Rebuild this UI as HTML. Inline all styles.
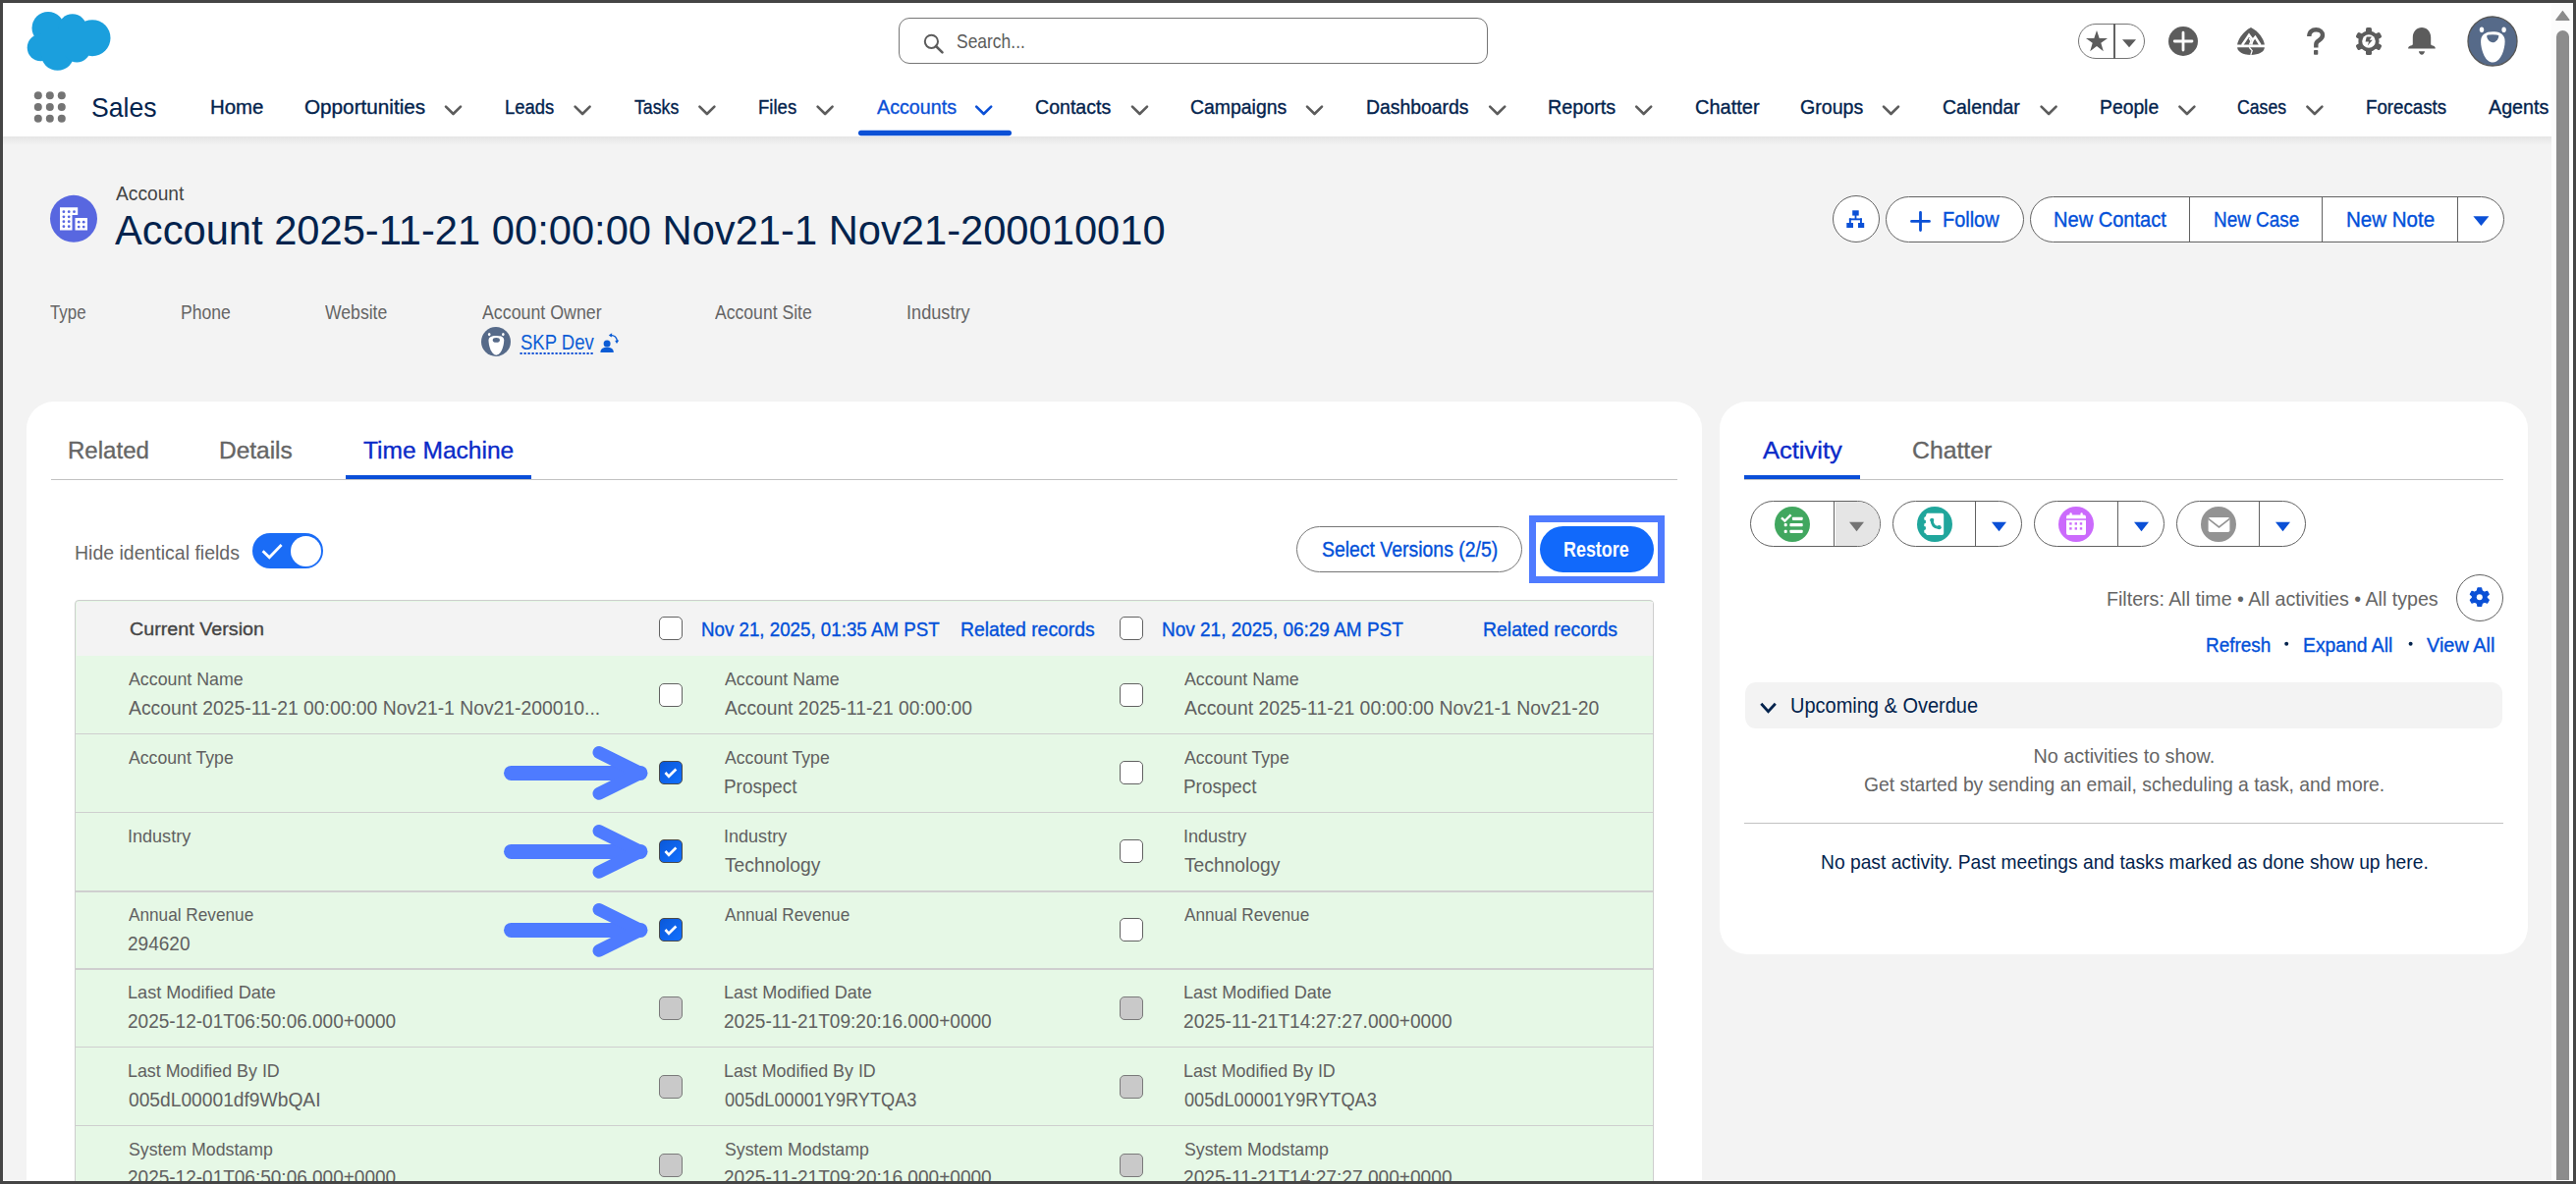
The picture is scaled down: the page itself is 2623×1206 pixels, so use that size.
<!DOCTYPE html>
<html><head><meta charset="utf-8"><title>Account</title><style>
html,body{margin:0;padding:0}
body{width:2623px;height:1206px;position:relative;overflow:hidden;background:#454545;font-family:"Liberation Sans",sans-serif}
.t{position:absolute;white-space:nowrap;line-height:1;transform-origin:0 0}
.a{position:absolute;box-sizing:border-box}
.cb{position:absolute;box-sizing:border-box;width:24px;height:24px;border:1.3px solid #626262;border-radius:5px;background:#fff}
.cbd{background:#c9c9c9;border-color:#7a7a7a}
.cbc{background:linear-gradient(135deg,#0b58d8,#1270ff);border-color:#4a4a4a}
.rl{position:absolute;left:77px;width:1606px;height:1.5px;background:#cfcfcf}
svg.ov{position:absolute;left:0;top:0}

</style></head><body>
<div class="a" style="left:3px;top:3px;width:2595px;height:1200px;background:#f3f3f3"></div>
<div class="a" style="left:3px;top:3px;width:2595px;height:136px;background:#fff"></div>
<div class="a" style="left:3px;top:139px;width:2595px;height:9px;background:linear-gradient(rgba(0,0,0,0.06),rgba(0,0,0,0))"></div>
<div class="a" style="left:2598px;top:3px;width:22px;height:1200px;background:#fcfcfc"></div>
<div class="a" style="left:2603px;top:31px;width:13px;height:1171px;background:#8c8c8c;border-radius:6.5px 6.5px 0 0"></div>
<div class="a" style="left:3px;top:1202px;width:2595px;height:1px;background:#fcfcfc"></div>

<!-- search -->
<div class="a" style="left:915px;top:18px;width:600px;height:47px;border:1.5px solid #767676;border-radius:11px;background:#fff"></div>
<!-- favorites pill -->
<div class="a" style="left:2116px;top:24px;width:68px;height:36px;border:1.5px solid #767676;border-radius:18px;background:#fff"></div>
<div class="a" style="left:2152px;top:24px;width:2px;height:36px;background:#626262"></div>

<!-- cards -->
<div class="a" style="left:27px;top:409px;width:1706px;height:900px;border-radius:28px;background:#fff"></div>
<div class="a" style="left:1751px;top:409px;width:823px;height:563px;border-radius:28px;background:#fff"></div>

<!-- tabs -->
<div class="a" style="left:52px;top:488px;width:1656px;height:1px;background:#c2c2c2"></div>
<div class="a" style="left:352px;top:484px;width:189px;height:4px;background:#0b4fd8"></div>
<div class="a" style="left:1776px;top:488px;width:773px;height:1px;background:#c2c2c2"></div>
<div class="a" style="left:1776px;top:484px;width:118px;height:4px;background:#0b4fd8"></div>

<!-- toggle -->
<div class="a" style="left:257px;top:543px;width:72px;height:36px;border-radius:18px;background:#1a6cf6"></div>
<div class="a" style="left:296px;top:545.5px;width:31px;height:31px;border-radius:50%;background:#fff"></div>

<!-- select versions / restore -->
<div class="a" style="left:1320px;top:536px;width:230px;height:47px;border:1.5px solid #767676;border-radius:23.5px;background:#fff"></div>
<div class="a" style="left:1557px;top:525px;width:138px;height:69px;border:7px solid #4f7bff"></div>
<div class="a" style="left:1568px;top:536px;width:116px;height:47px;border-radius:23.5px;background:#1169fb"></div>

<!-- page header buttons -->
<div class="a" style="left:1866px;top:199px;width:48px;height:48px;border:1.5px solid #626262;border-radius:50%;background:#fff"></div>
<div class="a" style="left:1920px;top:200px;width:141px;height:47px;border:1.5px solid #626262;border-radius:23.5px;background:#fff"></div>
<div class="a" style="left:2067px;top:200px;width:483px;height:47px;border:1.5px solid #626262;border-radius:23.5px;background:#fff"></div>
<div class="a" style="left:2228.8px;top:200px;width:1.5px;height:47px;background:#626262"></div>
<div class="a" style="left:2363.5px;top:200px;width:1.5px;height:47px;background:#626262"></div>
<div class="a" style="left:2501.7px;top:200px;width:1.5px;height:47px;background:#626262"></div>

<!-- table -->
<div class="a" style="left:76px;top:611px;width:1608px;height:700px;border:1.5px solid #cdcdcd;border-radius:4px 4px 0 0;background:#e6f8e6"></div>
<div class="a" style="left:77.5px;top:612.5px;width:1605px;height:55.1px;background:#f3f3f3;border-radius:0"></div>
<div class="rl" style="top:746.8px"></div>
<div class="rl" style="top:826.8px"></div>
<div class="rl" style="top:907px"></div>
<div class="rl" style="top:986px"></div>
<div class="rl" style="top:1065.9px"></div>
<div class="rl" style="top:1145.8px"></div>

<div class="cb" style="left:671px;top:628px"></div>
<div class="cb" style="left:1140px;top:628px"></div>
<div class="cb" style="left:671px;top:696px"></div>
<div class="cb" style="left:1140px;top:696px"></div>
<div class="cb cbc" style="left:671px;top:775px"></div>
<div class="cb" style="left:1140px;top:775px"></div>
<div class="cb cbc" style="left:671px;top:855px"></div>
<div class="cb" style="left:1140px;top:855px"></div>
<div class="cb cbc" style="left:671px;top:935px"></div>
<div class="cb" style="left:1140px;top:935px"></div>
<div class="cb cbd" style="left:671px;top:1015px"></div>
<div class="cb cbd" style="left:1140px;top:1015px"></div>
<div class="cb cbd" style="left:671px;top:1095px"></div>
<div class="cb cbd" style="left:1140px;top:1095px"></div>
<div class="cb cbd" style="left:671px;top:1175px"></div>
<div class="cb cbd" style="left:1140px;top:1175px"></div>

<!-- activity button groups -->
<div class="a" style="left:1782px;top:510px;width:133px;height:47px;border:1.5px solid #626262;border-radius:23.5px;background:#fff;overflow:hidden"><div style="position:absolute;left:85.6px;top:0;width:50px;height:47px;background:#e5e5e5"></div></div>
<div class="a" style="left:1866.9px;top:510px;width:1.5px;height:47px;background:#626262"></div>
<div class="a" style="left:1927px;top:510px;width:132px;height:47px;border:1.5px solid #626262;border-radius:23.5px;background:#fff"></div>
<div class="a" style="left:2010.7px;top:510px;width:1.5px;height:47px;background:#626262"></div>
<div class="a" style="left:2071px;top:510px;width:133px;height:47px;border:1.5px solid #626262;border-radius:23.5px;background:#fff"></div>
<div class="a" style="left:2155.6px;top:510px;width:1.5px;height:47px;background:#626262"></div>
<div class="a" style="left:2216px;top:510px;width:132px;height:47px;border:1.5px solid #626262;border-radius:23.5px;background:#fff"></div>
<div class="a" style="left:2299.5px;top:510px;width:1.5px;height:47px;background:#626262"></div>
<div class="a" style="left:2501px;top:584.5px;width:48px;height:48px;border:1.5px solid #626262;border-radius:50%;background:#fff"></div>
<div class="a" style="left:1777px;top:695px;width:771px;height:47px;border-radius:11px;background:#f3f3f3"></div>
<div class="a" style="left:1776px;top:838px;width:773px;height:1px;background:#c2c2c2"></div>

<svg class="ov" width="2623" height="1206" viewBox="0 0 2623 1206">
<!-- scrollbar arrow -->
<path d="M2609.4 11.5 L2616 20.3 L2602.8 20.3 Z" fill="#8c8c8c" stroke="#8c8c8c" stroke-width="1.2" stroke-linejoin="round"/>
<!-- salesforce logo -->
<g fill="#1b9fdd">
<circle cx="49" cy="28.5" r="16.5"/><circle cx="73.8" cy="28.6" r="14.4"/><circle cx="94" cy="38.7" r="18.5"/>
<circle cx="41.5" cy="48.5" r="13.8"/><circle cx="58.6" cy="55" r="16.8"/><circle cx="78.3" cy="50" r="13.6"/>
<rect x="42" y="30" width="50" height="26"/>
</g>
<!-- search icon -->
<circle cx="948.4" cy="42.3" r="6.6" fill="none" stroke="#5c5c5c" stroke-width="2"/>
<path d="M953 47 L959.5 53.4" stroke="#5c5c5c" stroke-width="2.6" stroke-linecap="round"/>
<!-- favorites star + caret -->
<path d="M2135 31 L2137.7 38.9 L2146 38.9 L2139.3 43.8 L2141.8 52.2 L2135 47 L2128.2 52.2 L2130.7 43.8 L2124 38.9 L2132.3 38.9 Z" fill="#5c5c5c"/>
<path d="M2161 40.3 L2175 40.3 L2168 48.2 Z" fill="#5c5c5c"/>
<!-- plus circle -->
<circle cx="2223" cy="42" r="15" fill="#5c5c5c"/>
<path d="M2223 33.2 V51 M2214.2 42 H2232" stroke="#fff" stroke-width="2.8" stroke-linecap="round"/>
<!-- trailhead -->
<path d="M2292 28.1 C2300 32 2305 40 2305.9 45.4 L2278.1 45.4 C2279 40 2284 32 2292 28.1 Z" fill="#5c5c5c"/>
<path d="M2278.1 48.3 L2305.9 48.3 C2305.5 53 2300 55.9 2292 55.9 C2284 55.9 2278.5 53 2278.1 48.3 Z" fill="#5c5c5c"/>
<path d="M2283 46 L2290 35.6 L2293.8 40.8 L2296.4 37.8 L2301.6 46" fill="none" stroke="#fff" stroke-width="2.4" stroke-linejoin="miter"/>
<path d="M2290.3 38.8 L2292 42 L2290.6 45.6" fill="none" stroke="#fff" stroke-width="1.5"/>
<path d="M2293.8 40.8 L2292.4 45.6" fill="none" stroke="#fff" stroke-width="2"/>
<path d="M2290.3 48.3 L2293.2 51.6 L2291.8 55.9" fill="none" stroke="#fff" stroke-width="1.3"/>
<!-- question -->
<path d="M2351.3 37 C2351.3 32.3 2354.3 30.3 2358.3 30.3 C2362.3 30.3 2365 32.6 2365 35.8 C2365 39 2362.5 40.3 2360.5 41.6 C2358.8 42.7 2358.3 43.8 2358.3 45.5 L2358.3 48.5" fill="none" stroke="#5c5c5c" stroke-width="4.4"/>
<rect x="2356" y="51" width="4.3" height="4.7" rx="0.8" fill="#5c5c5c"/>
<!-- gear -->
<g transform="translate(2412,42)" fill="#5c5c5c">
<circle cx="0" cy="0" r="10.6"/>
<rect x="-3" y="-14" width="6" height="8" rx="1.6"/>
<rect x="-3" y="-14" width="6" height="8" rx="1.6" transform="rotate(60)"/>
<rect x="-3" y="-14" width="6" height="8" rx="1.6" transform="rotate(120)"/>
<rect x="-3" y="-14" width="6" height="8" rx="1.6" transform="rotate(180)"/>
<rect x="-3" y="-14" width="6" height="8" rx="1.6" transform="rotate(240)"/>
<rect x="-3" y="-14" width="6" height="8" rx="1.6" transform="rotate(300)"/>
<circle cx="0" cy="0" r="6.8" fill="#fff"/>
<path d="M-2.3 -4.6 L3 -4.6 L0.7 -1.3 L3.8 -1.3 L-1.2 4.4 L0.1 0.6 L-3.4 0.6 Z"/>
</g>
<!-- bell -->
<path d="M2466 28 C2461 28 2456.8 32 2456.8 38 L2456.8 45 C2456.8 46 2455 46.5 2453.5 47 C2452.5 47.4 2452.1 48.3 2452.1 49.6 L2479.8 49.6 C2479.8 48.3 2479.4 47.4 2478.4 47 C2477 46.5 2475.2 46 2475.2 45 L2475.2 38 C2475.2 32 2471 28 2466 28 Z" fill="#5c5c5c"/>
<path d="M2462.9 52.2 L2469 52.2 C2468.6 54.4 2467.5 55.7 2466 55.7 C2464.5 55.7 2463.3 54.4 2462.9 52.2 Z" fill="#5c5c5c"/>
<!-- avatar -->
<circle cx="2538" cy="42" r="25" fill="#566a89" stroke="#555" stroke-width="1.3"/>
<ellipse cx="2527" cy="30.2" rx="2.2" ry="2.8" fill="#fff"/>
<ellipse cx="2549.6" cy="30.2" rx="2.2" ry="2.8" fill="#fff"/>
<path d="M2538.3 32.2 C2546 32.2 2550.6 35.5 2550.6 42 C2550.6 51 2546 63.6 2538.3 63.6 C2530.6 63.6 2526.1 51 2526.1 42 C2526.1 35.5 2530.6 32.2 2538.3 32.2 Z" fill="#fff"/>
<path d="M2532.2 36.6 Q2532.2 35.3 2538.2 35.3 Q2544.3 35.3 2544.3 36.6 C2544.3 40 2541.5 43.2 2538.2 43.2 C2535 43.2 2532.2 40 2532.2 36.6 Z" fill="#566a89"/>
<!-- app launcher -->
<g fill="#747474">
<circle cx="38.8" cy="97.2" r="4"/><circle cx="50.8" cy="97.2" r="4"/><circle cx="62.8" cy="97.2" r="4"/>
<circle cx="38.8" cy="109" r="4"/><circle cx="50.8" cy="109" r="4"/><circle cx="62.8" cy="109" r="4"/>
<circle cx="38.8" cy="120.7" r="4"/><circle cx="50.8" cy="120.7" r="4"/><circle cx="62.8" cy="120.7" r="4"/>
</g>
<!-- nav chevrons -->
<g fill="none" stroke="#5c5c5c" stroke-width="2.6" stroke-linecap="round" stroke-linejoin="round">
<path d="M454.0 108.6 L461.5 116 L469.0 108.6"/>
<path d="M585.6 108.6 L593.1 116 L600.6 108.6"/>
<path d="M712.4 108.6 L719.9 116 L727.4 108.6"/>
<path d="M832.6 108.6 L840.1 116 L847.6 108.6"/>
<path d="M1153.0 108.6 L1160.5 116 L1168.0 108.6"/>
<path d="M1331.0 108.6 L1338.5 116 L1346.0 108.6"/>
<path d="M1517.2 108.6 L1524.7 116 L1532.2 108.6"/>
<path d="M1666.2 108.6 L1673.7 116 L1681.2 108.6"/>
<path d="M1918.0 108.6 L1925.5 116 L1933.0 108.6"/>
<path d="M2078.6 108.6 L2086.1 116 L2093.6 108.6"/>
<path d="M2219.4 108.6 L2226.9 116 L2234.4 108.6"/>
<path d="M2349.4 108.6 L2356.9 116 L2364.4 108.6"/>
</g>
<path d="M994.2 108.6 L1001.7 116 L1009.2 108.6" fill="none" stroke="#0b50d6" stroke-width="2.6" stroke-linecap="round" stroke-linejoin="round"/>
<rect x="874" y="132.8" width="156" height="5.4" rx="2.7" fill="#0b50d6"/>
<!-- account icon -->
<circle cx="75" cy="222.8" r="24" fill="#5867e0"/>
<path d="M61 211.3 H79.2 V219 H73.5 V234.5 H61 Z" fill="#fff"/>
<rect x="76.5" y="222" width="12.5" height="12.5" fill="#fff"/>
<g fill="#5867e0">
<circle cx="64.9" cy="215.7" r="1.4"/><circle cx="70.2" cy="215.7" r="1.4"/><circle cx="75.5" cy="215.7" r="1.4"/>
<circle cx="64.9" cy="220.8" r="1.4"/><circle cx="70.2" cy="220.8" r="1.4"/>
<circle cx="64.9" cy="225.7" r="1.4"/><circle cx="70.2" cy="225.7" r="1.4"/>
<circle cx="64.9" cy="230.7" r="1.4"/><circle cx="70.2" cy="230.7" r="1.4"/>
<circle cx="80.2" cy="226.2" r="1.4"/><circle cx="85.2" cy="226.2" r="1.4"/>
<circle cx="80.2" cy="231.1" r="1.4"/><circle cx="85.2" cy="231.1" r="1.4"/>
</g>
<!-- hierarchy icon -->
<g fill="#0b50d6">
<rect x="1886.2" y="214.3" width="6.5" height="5.3"/>
<rect x="1888.6" y="219" width="1.8" height="4"/>
<rect x="1882.9" y="222.4" width="13" height="1.9"/>
<rect x="1882.9" y="222.4" width="1.9" height="5"/>
<rect x="1894" y="222.4" width="1.9" height="5"/>
<rect x="1880.3" y="227" width="6.7" height="5"/>
<rect x="1892" y="227" width="6.2" height="5"/>
</g>
<!-- follow plus -->
<path d="M1955.5 216.3 V234.5 M1946.5 225.4 H1964.5" stroke="#0b50d6" stroke-width="2.8" stroke-linecap="round"/>
<!-- dropdown triangle -->
<path d="M2518.4 220.2 L2534.4 220.2 L2526.4 230 Z" fill="#0b50d6"/>
<!-- owner avatar -->
<circle cx="505" cy="348" r="15" fill="#566a89"/>
<ellipse cx="498.2" cy="340.6" rx="1.3" ry="1.7" fill="#fff"/>
<ellipse cx="512.3" cy="340.6" rx="1.3" ry="1.7" fill="#fff"/>
<path d="M505.3 341.9 C510.7 341.9 513.2 343.5 513.2 346.5 C513.2 352 510.3 361.7 505.3 361.7 C500.3 361.7 497.5 352 497.5 346.5 C497.5 343.5 500 341.9 505.3 341.9 Z" fill="#fff"/>
<ellipse cx="505.3" cy="346.4" rx="3.6" ry="2.4" fill="#566a89"/>
<!-- dotted underline -->
<path d="M529.5 359.9 H604.5" stroke="#0b50d6" stroke-width="2" stroke-dasharray="2.2 1.8"/>
<!-- change owner icon -->
<circle cx="618.1" cy="350" r="3.5" fill="#0b5cd5"/>
<path d="M611.4 359 C611.4 355.3 614 353.8 618.1 353.8 C622.2 353.8 624.8 355.3 624.8 359 Z" fill="#0b5cd5"/>
<path d="M621 341.5 C625 341 628 343.5 628.6 347.5" fill="none" stroke="#0b5cd5" stroke-width="1.6"/>
<path d="M619.8 341.6 L623.2 339.3 L622.8 343.6 Z M626.2 347 L630.3 346.6 L628 350 Z" fill="#0b5cd5"/>

<!-- toggle check -->
<path d="M267.6 561.3 L274.3 567.8 L286.6 555" fill="none" stroke="#fff" stroke-width="2.8"/>

<!-- checked marks -->
<g fill="none" stroke="#fff" stroke-width="2.6">
<path d="M677.5 787 L681 790.8 L688.4 783.5"/>
<path d="M677.5 867 L681 870.8 L688.4 863.5"/>
<path d="M677.5 947 L681 950.8 L688.4 943.5"/>
</g>

<!-- arrows -->
<g fill="none" stroke="#4e7bff" stroke-linecap="round" stroke-linejoin="round">
<path d="M520.5 787.4 H652" stroke-width="15"/>
<path d="M610 766.5 L652 787.4 L610 808.3" stroke-width="13"/>
<path d="M520.5 867.4 H652" stroke-width="15"/>
<path d="M610 846.5 L652 867.4 L610 888.3" stroke-width="13"/>
<path d="M520.5 947.4 H652" stroke-width="15"/>
<path d="M610 926.5 L652 947.4 L610 968.3" stroke-width="13"/>
</g>

<!-- activity icons -->
<circle cx="1825" cy="534" r="18" fill="#41a75f"/>
<path d="M1814 527.4 L1817.4 530.6 L1823.6 524.4" fill="none" stroke="#fff" stroke-width="2.4"/>
<g fill="#fff">
<rect x="1824.9" y="526.8" width="10.8" height="3.1" rx="0.8"/>
<rect x="1822.4" y="533.1" width="13.3" height="3.1" rx="0.8"/>
<rect x="1822.4" y="539.8" width="13.3" height="3.1" rx="0.8"/>
<rect x="1816.7" y="533.1" width="3" height="3.1" rx="1"/>
<rect x="1816.7" y="539.8" width="3" height="3.1" rx="1"/>
</g>
<path d="M1883 531.7 L1898 531.7 L1890.5 541.3 Z" fill="#747474"/>

<circle cx="1970" cy="534" r="18" fill="#20a69c"/>
<path d="M1962.5 522.8 H1977.5 Q1979.2 522.8 1979.2 524.5 V543.2 Q1979.2 544.9 1977.5 544.9 H1962.5 Q1961.4 544.9 1960.9 543.6 L1959.3 542.4 V540 L1960.9 539.3 V536.6 L1959.3 535.9 V533.5 L1960.9 532.8 V530.1 L1959.3 529.4 V527 L1960.9 526 Q1961.4 522.8 1962.5 522.8 Z" fill="#fff"/>
<path d="M1967.3 529.9 C1967 534 1969.5 537.6 1974.3 537.6" fill="none" stroke="#20a69c" stroke-width="3" stroke-linecap="round"/>
<circle cx="1967.2" cy="529.8" r="2.1" fill="#20a69c"/>
<circle cx="1974.6" cy="537.2" r="2.1" fill="#20a69c"/>
<path d="M2028 531.7 L2043 531.7 L2035.5 541.3 Z" fill="#0b50d6"/>

<circle cx="2114" cy="534" r="18" fill="#cb6afc"/>
<rect x="2104" y="524.5" width="20" height="20.5" rx="2" fill="#fff"/>
<rect x="2104" y="528.3" width="20" height="1.5" fill="#cb6afc"/>
<rect x="2107.5" y="522.2" width="2.2" height="3.5" rx="1" fill="#fff"/>
<rect x="2118.5" y="522.2" width="2.2" height="3.5" rx="1" fill="#fff"/>
<g fill="#cb6afc">
<rect x="2107.2" y="532.2" width="2.4" height="2.4"/><rect x="2112.6" y="532.2" width="2.4" height="2.4"/><rect x="2117.8" y="532.2" width="2.4" height="2.4"/>
<rect x="2107.2" y="537.2" width="2.4" height="2.4"/><rect x="2112.6" y="537.2" width="2.4" height="2.4"/><rect x="2117.8" y="537.2" width="2.4" height="2.4"/>
</g>
<path d="M2173 531.7 L2188 531.7 L2180.5 541.3 Z" fill="#0b50d6"/>

<circle cx="2259" cy="534" r="18" fill="#939393"/>
<rect x="2248.6" y="527" width="21.8" height="15" rx="1.8" fill="#fff"/>
<path d="M2248.6 528.4 L2259.5 537 L2270.4 528.4" fill="none" stroke="#939393" stroke-width="1.6"/>
<path d="M2317 531.7 L2332 531.7 L2324.5 541.3 Z" fill="#0b50d6"/>

<!-- activity gear -->
<g transform="translate(2524.8,608.2)">
<path d="M-1.8 -9.3 L1.8 -9.3 L2.5 -6.4 L4.9 -5 L7.8 -5.9 L9.5 -2.9 L7.3 -0.8 L7.3 0.8 L9.5 2.9 L7.8 5.9 L4.9 5 L2.5 6.4 L1.8 9.3 L-1.8 9.3 L-2.5 6.4 L-4.9 5 L-7.8 5.9 L-9.5 2.9 L-7.3 0.8 L-7.3 -0.8 L-9.5 -2.9 L-7.8 -5.9 L-4.9 -5 L-2.5 -6.4 Z" fill="#0b50d6" stroke="#0b50d6" stroke-width="1.2" stroke-linejoin="round"/>
<circle cx="0" cy="0" r="3" fill="#fff"/>
</g>
<circle cx="2328.2" cy="655.7" r="2" fill="#03234d"/>
<circle cx="2454.6" cy="655.7" r="2" fill="#03234d"/>
<!-- upcoming chevron -->
<path d="M1793.3 716.8 L1800.5 724.6 L1807.8 716.8" fill="none" stroke="#03234d" stroke-width="2.8"/>
</svg>

<div class="t" style="left:973.80px;top:32.54px;font-size:19.80px;color:#5c5c5c;transform:scaleX(0.8820);">Search...</div>
<div class="t" style="left:92.77px;top:94.87px;font-size:28.50px;color:#03234d;transform:scaleX(0.9323);">Sales</div>
<div class="t" style="left:213.71px;top:98.86px;font-size:20.60px;color:#03234d;transform:scaleX(0.9910);-webkit-text-stroke:0.35px #03234d;">Home</div>
<div class="t" style="left:309.80px;top:98.86px;font-size:20.60px;color:#03234d;transform:scaleX(1.0050);-webkit-text-stroke:0.35px #03234d;">Opportunities</div>
<div class="t" style="left:514.11px;top:98.86px;font-size:20.60px;color:#03234d;transform:scaleX(0.8939);-webkit-text-stroke:0.35px #03234d;">Leads</div>
<div class="t" style="left:646.00px;top:98.86px;font-size:20.60px;color:#03234d;transform:scaleX(0.8597);-webkit-text-stroke:0.35px #03234d;">Tasks</div>
<div class="t" style="left:772.10px;top:98.86px;font-size:20.60px;color:#03234d;transform:scaleX(0.9008);-webkit-text-stroke:0.35px #03234d;">Files</div>
<div class="t" style="left:892.80px;top:98.86px;font-size:20.60px;color:#0b50d6;transform:scaleX(0.9560);-webkit-text-stroke:0.35px #0b50d6;">Accounts</div>
<div class="t" style="left:1054.05px;top:98.86px;font-size:20.60px;color:#03234d;transform:scaleX(0.9503);-webkit-text-stroke:0.35px #03234d;">Contacts</div>
<div class="t" style="left:1212.06px;top:98.86px;font-size:20.60px;color:#03234d;transform:scaleX(0.9430);-webkit-text-stroke:0.35px #03234d;">Campaigns</div>
<div class="t" style="left:1391.06px;top:98.86px;font-size:20.60px;color:#03234d;transform:scaleX(0.9413);-webkit-text-stroke:0.35px #03234d;">Dashboards</div>
<div class="t" style="left:1576.44px;top:98.86px;font-size:20.60px;color:#03234d;transform:scaleX(0.9589);-webkit-text-stroke:0.35px #03234d;">Reports</div>
<div class="t" style="left:1725.83px;top:98.86px;font-size:20.60px;color:#03234d;transform:scaleX(0.9704);-webkit-text-stroke:0.35px #03234d;">Chatter</div>
<div class="t" style="left:1833.05px;top:98.86px;font-size:20.60px;color:#03234d;transform:scaleX(0.9511);-webkit-text-stroke:0.35px #03234d;">Groups</div>
<div class="t" style="left:1978.06px;top:98.86px;font-size:20.60px;color:#03234d;transform:scaleX(0.9430);-webkit-text-stroke:0.35px #03234d;">Calendar</div>
<div class="t" style="left:2137.56px;top:98.86px;font-size:20.60px;color:#03234d;transform:scaleX(0.9382);-webkit-text-stroke:0.35px #03234d;">People</div>
<div class="t" style="left:2278.14px;top:98.86px;font-size:20.60px;color:#03234d;transform:scaleX(0.8585);-webkit-text-stroke:0.35px #03234d;">Cases</div>
<div class="t" style="left:2409.09px;top:98.86px;font-size:20.60px;color:#03234d;transform:scaleX(0.9090);-webkit-text-stroke:0.35px #03234d;">Forecasts</div>
<div class="t" style="left:2534.00px;top:98.86px;font-size:20.60px;color:#03234d;transform:scaleX(0.9559);-webkit-text-stroke:0.35px #03234d;">Agents</div>
<div class="t" style="left:117.60px;top:186.64px;font-size:20.50px;color:#444444;transform:scaleX(0.9358);">Account</div>
<div class="t" style="left:117.40px;top:213.42px;font-size:43.20px;color:#03234d;transform:scaleX(0.9649);">Account 2025-11-21 00:00:00 Nov21-1 Nov21-200010010</div>
<div class="t" style="left:1977.76px;top:213.35px;font-size:21.20px;color:#0250d9;transform:scaleX(0.9405);-webkit-text-stroke:0.35px #0250d9;">Follow</div>
<div class="t" style="left:2091.05px;top:213.35px;font-size:21.20px;color:#0250d9;transform:scaleX(0.9468);-webkit-text-stroke:0.35px #0250d9;">New Contact</div>
<div class="t" style="left:2254.11px;top:213.35px;font-size:21.20px;color:#0250d9;transform:scaleX(0.8921);-webkit-text-stroke:0.35px #0250d9;">New Case</div>
<div class="t" style="left:2389.03px;top:213.35px;font-size:21.20px;color:#0250d9;transform:scaleX(0.9688);-webkit-text-stroke:0.35px #0250d9;">New Note</div>
<div class="t" style="left:51.20px;top:308.84px;font-size:19.80px;color:#656565;transform:scaleX(0.8511);">Type</div>
<div class="t" style="left:183.71px;top:308.84px;font-size:19.80px;color:#656565;transform:scaleX(0.8897);">Phone</div>
<div class="t" style="left:330.70px;top:308.84px;font-size:19.80px;color:#656565;transform:scaleX(0.8903);">Website</div>
<div class="t" style="left:491.00px;top:308.84px;font-size:19.80px;color:#656565;transform:scaleX(0.8994);">Account Owner</div>
<div class="t" style="left:728.40px;top:308.84px;font-size:19.80px;color:#656565;transform:scaleX(0.8896);">Account Site</div>
<div class="t" style="left:923.08px;top:308.84px;font-size:19.80px;color:#656565;transform:scaleX(0.9183);">Industry</div>
<div class="t" style="left:530.40px;top:338.78px;font-size:21.40px;color:#0b5cd5;transform:scaleX(0.8658);">SKP Dev</div>
<div class="t" style="left:68.74px;top:447.17px;font-size:24.60px;color:#656565;transform:scaleX(0.9782);-webkit-text-stroke:0.35px #656565;">Related</div>
<div class="t" style="left:222.51px;top:447.17px;font-size:24.60px;color:#656565;transform:scaleX(0.9948);-webkit-text-stroke:0.35px #656565;">Details</div>
<div class="t" style="left:370.00px;top:447.17px;font-size:24.60px;color:#0a2ac8;transform:scaleX(0.9983);-webkit-text-stroke:0.35px #0a2ac8;">Time Machine</div>
<div class="t" style="left:1794.50px;top:447.47px;font-size:24.60px;color:#0a2ac8;transform:scaleX(1.0370);-webkit-text-stroke:0.35px #0a2ac8;">Activity</div>
<div class="t" style="left:1946.99px;top:447.47px;font-size:24.60px;color:#656565;transform:scaleX(1.0068);-webkit-text-stroke:0.35px #656565;">Chatter</div>
<div class="t" style="left:76.21px;top:554.14px;font-size:19.80px;color:#656565;transform:scaleX(0.9850);">Hide identical fields</div>
<div class="t" style="left:1345.80px;top:548.75px;font-size:21.20px;color:#0250d9;transform:scaleX(0.9165);-webkit-text-stroke:0.35px #0250d9;">Select Versions (2/5)</div>
<div class="t" style="left:1592.16px;top:548.75px;font-size:21.20px;color:#ffffff;transform:scaleX(0.8450);font-weight:700;">Restore</div>
<div class="t" style="left:131.60px;top:631.70px;font-size:18.90px;color:#444444;transform:scaleX(1.0433);-webkit-text-stroke:0.35px #444444;">Current Version</div>
<div class="t" style="left:714.35px;top:631.54px;font-size:19.80px;color:#0250d9;transform:scaleX(0.9472);-webkit-text-stroke:0.35px #0250d9;">Nov 21, 2025, 01:35 AM PST</div>
<div class="t" style="left:978.32px;top:631.54px;font-size:19.80px;color:#0250d9;transform:scaleX(0.9795);-webkit-text-stroke:0.35px #0250d9;">Related records</div>
<div class="t" style="left:1183.24px;top:631.54px;font-size:19.80px;color:#0250d9;transform:scaleX(0.9593);-webkit-text-stroke:0.35px #0250d9;">Nov 21, 2025, 06:29 AM PST</div>
<div class="t" style="left:1510.42px;top:631.54px;font-size:19.80px;color:#0250d9;transform:scaleX(0.9816);-webkit-text-stroke:0.35px #0250d9;">Related records</div>
<div class="t" style="left:131.40px;top:682.62px;font-size:18.40px;color:#606060;transform:scaleX(0.9669);">Account Name</div>
<div class="t" style="left:131.40px;top:711.55px;font-size:19.90px;color:#606060;transform:scaleX(0.9722);">Account 2025-11-21 00:00:00 Nov21-1 Nov21-200010...</div>
<div class="t" style="left:737.70px;top:682.62px;font-size:18.40px;color:#606060;transform:scaleX(0.9669);">Account Name</div>
<div class="t" style="left:737.70px;top:711.55px;font-size:19.90px;color:#606060;transform:scaleX(0.9664);">Account 2025-11-21 00:00:00</div>
<div class="t" style="left:1206.00px;top:682.62px;font-size:18.40px;color:#606060;transform:scaleX(0.9669);">Account Name</div>
<div class="t" style="left:1206.00px;top:711.55px;font-size:19.90px;color:#606060;transform:scaleX(0.9750);">Account 2025-11-21 00:00:00 Nov21-1 Nov21-20</div>
<div class="t" style="left:131.40px;top:762.62px;font-size:18.40px;color:#606060;transform:scaleX(0.9604);">Account Type</div>
<div class="t" style="left:737.70px;top:762.62px;font-size:18.40px;color:#606060;transform:scaleX(0.9604);">Account Type</div>
<div class="t" style="left:736.75px;top:791.55px;font-size:19.90px;color:#606060;transform:scaleX(0.9491);">Prospect</div>
<div class="t" style="left:1206.00px;top:762.62px;font-size:18.40px;color:#606060;transform:scaleX(0.9604);">Account Type</div>
<div class="t" style="left:1205.05px;top:791.55px;font-size:19.90px;color:#606060;transform:scaleX(0.9491);">Prospect</div>
<div class="t" style="left:130.42px;top:842.62px;font-size:18.40px;color:#606060;transform:scaleX(0.9813);">Industry</div>
<div class="t" style="left:736.72px;top:842.62px;font-size:18.40px;color:#606060;transform:scaleX(0.9813);">Industry</div>
<div class="t" style="left:737.70px;top:871.55px;font-size:19.90px;color:#606060;transform:scaleX(0.9674);">Technology</div>
<div class="t" style="left:1205.02px;top:842.62px;font-size:18.40px;color:#606060;transform:scaleX(0.9813);">Industry</div>
<div class="t" style="left:1206.00px;top:871.55px;font-size:19.90px;color:#606060;transform:scaleX(0.9674);">Technology</div>
<div class="t" style="left:131.40px;top:922.72px;font-size:18.40px;color:#606060;transform:scaleX(0.9355);">Annual Revenue</div>
<div class="t" style="left:130.44px;top:951.65px;font-size:19.90px;color:#606060;transform:scaleX(0.9570);">294620</div>
<div class="t" style="left:737.70px;top:922.72px;font-size:18.40px;color:#606060;transform:scaleX(0.9355);">Annual Revenue</div>
<div class="t" style="left:1206.00px;top:922.72px;font-size:18.40px;color:#606060;transform:scaleX(0.9355);">Annual Revenue</div>
<div class="t" style="left:130.42px;top:1001.72px;font-size:18.40px;color:#606060;transform:scaleX(0.9841);">Last Modified Date</div>
<div class="t" style="left:130.44px;top:1030.65px;font-size:19.90px;color:#606060;transform:scaleX(0.9553);">2025-12-01T06:50:06.000+0000</div>
<div class="t" style="left:736.72px;top:1001.72px;font-size:18.40px;color:#606060;transform:scaleX(0.9841);">Last Modified Date</div>
<div class="t" style="left:736.74px;top:1030.65px;font-size:19.90px;color:#606060;transform:scaleX(0.9589);">2025-11-21T09:20:16.000+0000</div>
<div class="t" style="left:1205.02px;top:1001.72px;font-size:18.40px;color:#606060;transform:scaleX(0.9841);">Last Modified Date</div>
<div class="t" style="left:1205.04px;top:1030.65px;font-size:19.90px;color:#606060;transform:scaleX(0.9617);">2025-11-21T14:27:27.000+0000</div>
<div class="t" style="left:130.43px;top:1081.62px;font-size:18.40px;color:#606060;transform:scaleX(0.9705);">Last Modified By ID</div>
<div class="t" style="left:131.40px;top:1110.55px;font-size:19.90px;color:#606060;transform:scaleX(0.9659);">005dL00001df9WbQAI</div>
<div class="t" style="left:736.73px;top:1081.62px;font-size:18.40px;color:#606060;transform:scaleX(0.9705);">Last Modified By ID</div>
<div class="t" style="left:737.70px;top:1110.55px;font-size:19.90px;color:#606060;transform:scaleX(0.9121);">005dL00001Y9RYTQA3</div>
<div class="t" style="left:1205.03px;top:1081.62px;font-size:18.40px;color:#606060;transform:scaleX(0.9705);">Last Modified By ID</div>
<div class="t" style="left:1206.00px;top:1110.55px;font-size:19.90px;color:#606060;transform:scaleX(0.9140);">005dL00001Y9RYTQA3</div>
<div class="t" style="left:131.40px;top:1161.52px;font-size:18.40px;color:#606060;transform:scaleX(0.9641);">System Modstamp</div>
<div class="t" style="left:130.44px;top:1190.45px;font-size:19.90px;color:#606060;transform:scaleX(0.9553);">2025-12-01T06:50:06.000+0000</div>
<div class="t" style="left:737.70px;top:1161.52px;font-size:18.40px;color:#606060;transform:scaleX(0.9641);">System Modstamp</div>
<div class="t" style="left:736.74px;top:1190.45px;font-size:19.90px;color:#606060;transform:scaleX(0.9589);">2025-11-21T09:20:16.000+0000</div>
<div class="t" style="left:1206.00px;top:1161.52px;font-size:18.40px;color:#606060;transform:scaleX(0.9641);">System Modstamp</div>
<div class="t" style="left:1205.04px;top:1190.45px;font-size:19.90px;color:#606060;transform:scaleX(0.9617);">2025-11-21T14:27:27.000+0000</div>
<div class="t" style="left:2145.01px;top:601.44px;font-size:19.80px;color:#656565;transform:scaleX(0.9921);">Filters: All time • All activities • All types</div>
<div class="t" style="left:2246.34px;top:647.84px;font-size:19.80px;color:#0250d9;transform:scaleX(0.9560);-webkit-text-stroke:0.35px #0250d9;">Refresh</div>
<div class="t" style="left:2345.02px;top:647.84px;font-size:19.80px;color:#0250d9;transform:scaleX(0.9767);-webkit-text-stroke:0.35px #0250d9;">Expand All</div>
<div class="t" style="left:2471.00px;top:647.84px;font-size:19.80px;color:#0250d9;transform:scaleX(1.0057);-webkit-text-stroke:0.35px #0250d9;">View All</div>
<div class="t" style="left:1822.77px;top:709.28px;font-size:21.40px;color:#03234d;transform:scaleX(0.9344);">Upcoming &amp; Overdue</div>
<div class="t" style="left:2070.50px;top:761.24px;font-size:19.80px;color:#656565;">No activities to show.</div>
<div class="t" style="left:1898.02px;top:789.84px;font-size:19.80px;color:#656565;transform:scaleX(0.9761);">Get started by sending an email, scheduling a task, and more.</div>
<div class="t" style="left:1853.73px;top:869.04px;font-size:19.80px;color:#03234d;transform:scaleX(0.9725);">No past activity. Past meetings and tasks marked as done show up here.</div>
<div class="a" style="left:0;top:0;width:2623px;height:3px;background:#454545"></div>
<div class="a" style="left:0;top:1203px;width:2623px;height:3px;background:#454545"></div>
<div class="a" style="left:0;top:0;width:3px;height:1206px;background:#454545"></div>
<div class="a" style="left:2620px;top:0;width:3px;height:1206px;background:#454545"></div>
</body></html>
